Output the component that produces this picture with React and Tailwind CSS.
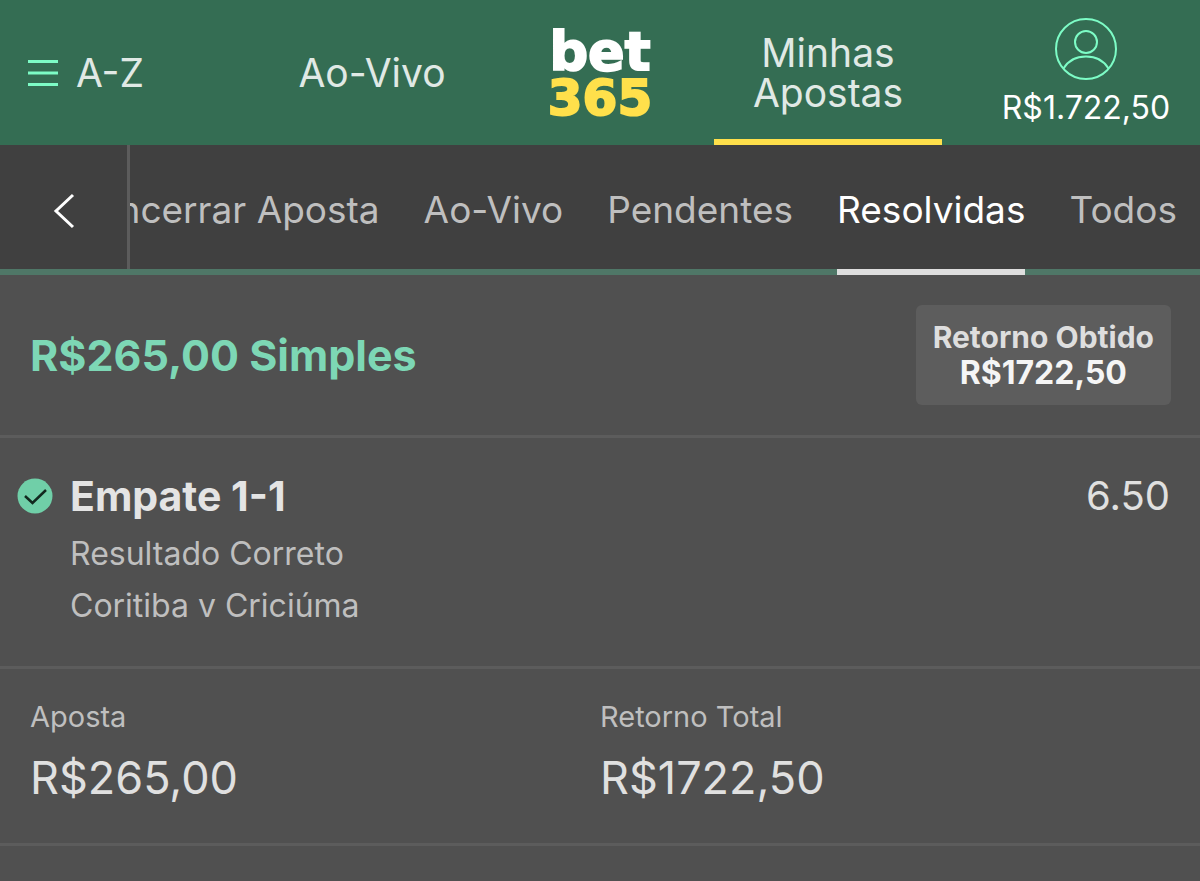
import clsx from "clsx";

const TABS = ["Encerrar Aposta", "Ao-Vivo", "Pendentes", "Resolvidas", "Todos"];
const ACTIVE_TAB = "Resolvidas";


const MenuIcon = () => (
  <svg width="30" height="28" viewBox="0 0 30 28" stroke="#7dfcc6" strokeWidth="3" aria-hidden="true">
    <path d="M0 2.500H30M0 14H30M0 25.500H30" />
  </svg>
)

const AccountIcon = () => (
  <svg width="62" height="62" viewBox="0 0 62 62" fill="none" stroke="#7dfcc6" strokeWidth="2" aria-hidden="true">
    <circle cx="31" cy="31" r="30" />
    <circle cx="31" cy="24" r="11" />
    <path d="M8.500 50.500C13 43 21 38.500 31 38.500S49 43 53.500 50.500" />
  </svg>
)

const BackIcon = () => (
  <svg width="22" height="36" viewBox="0 0 22 36" fill="none" stroke="#fff" strokeWidth="3" aria-hidden="true">
    <path d="M20 2L3 18L20 34" />
  </svg>
)

const WonIcon = () => (
  <svg width="36" height="36" viewBox="0 0 36 36" fill="none" role="img" aria-label="Ganha">
    <circle cx="18" cy="18" r="17.500" fill="#70cfa8" />
    <path d="M8 18L15.500 25L29 12" stroke="#12291f" strokeWidth="2.500" />
  </svg>
)

const Header = () => {
  return (
    <header className="flex h-[145px] bg-[#346d53] text-[39px] leading-10 text-[#e0e9e5]">
      <button className="flex w-[21.5%] items-center gap-[18px] pl-7"><MenuIcon />A-Z</button>
      <a href="#ao-vivo" className="flex w-[19%] items-center justify-center">Ao-Vivo</a>
      <a href="#inicio" className="flex w-[19%] flex-col items-center justify-center pt-1 font-['DejaVu_Sans',sans-serif] font-bold [-webkit-text-stroke-width:2px]">
        <span className="text-[54px] leading-[46px] text-white">bet</span>
        <span className="text-[50px] leading-[46px] text-[#ffe04b]">365</span>
      </a>
      <a href="#apostas" className="flex w-[19%] items-center justify-center border-b-6 border-[#ffe04b] pt-1.5 text-center">Minhas Apostas</a>
      <button className="flex w-[21.5%] flex-col items-center gap-2.5 pt-[18px] pl-[30px] text-[32px] leading-9 text-white">
        <AccountIcon />
        R$1.722,50
      </button>
    </header>
  )
}

const TabBar = () => {
  return (
    <nav className="flex h-[130px] bg-[#404040]">
      <button aria-label="Voltar" className="flex w-[127px] shrink-0 items-center justify-center border-b-6 border-[#4f7767] pt-2"><BackIcon /></button>
      <div className="mb-1.5 w-[3px] shrink-0 bg-[#5c5c5c] shadow-[0_6px_0_#4f7767]" />
      <div className="flex min-w-0 flex-1 justify-end gap-11 overflow-hidden bg-linear-to-t from-[#4f7767] from-[6px] to-[#404040] to-[6px] pr-[23px]">
        {TABS.map((tab) => (
          <a
            key={tab}
            href="#apostas"
            className={clsx(
              "flex shrink-0 items-center border-b-6 pt-1.5 text-[37px] whitespace-nowrap",
              tab === ACTIVE_TAB ? "border-[#dedede] text-white" : "border-transparent text-[#bfbfbf]"
            )}
          >
            {tab}
          </a>
        ))}
      </div>
    </nav>
  )
}

const Total = ({ label, value }) => (
  <div className="flex-1">
    <dt className="text-[29px] leading-9 text-[#bfbfbf]">{label}</dt>
    <dd className="mt-4 text-[45px] leading-[54px] text-[#e0e0e0]">{value}</dd>
  </div>
)

const Bet = () => {
  return (
    <main>
      <section className="flex items-center justify-between border-b-3 border-[#5c5c5c] py-[30px] pr-[29px] pl-[30px]">
        <h1 className="text-[43px] leading-[50px] font-bold text-[#7dd7b5]">R$265,00 Simples</h1>
        <div className="rounded-md bg-[#5d5d5d] px-[17px] py-[14px] text-center font-bold">
          <div className="text-[30px] leading-9 text-[#dedede]">Retorno Obtido</div>
          <div className="text-[32px] leading-9 text-[#f5f5f5]">R$1722,50</div>
        </div>
      </section>

      <section className="flex gap-[17px] border-b-3 border-[#5c5c5c] pt-[34px] pr-[30px] pb-[34px] pl-[17px]">
        <div className="flex h-12 items-center"><WonIcon /></div>
        <div className="flex-1">
          <h2 className="text-[41px] leading-[48px] font-bold text-[#e4e4e4]">Empate 1-1</h2>
          <p className="mt-2 text-[32px] leading-[52px] text-[#bfbfbf]">Resultado Correto</p>
          <p className="text-[32px] leading-[52px] text-[#bfbfbf]">Coritiba v Criciúma</p>
        </div>
        <div className="text-[40px] leading-[48px] text-[#e0e0e0]">6.50</div>
      </section>

      <dl className="flex border-b-3 border-[#5c5c5c] px-[30px] pt-[30px] pb-[38px]">
        <Total label="Aposta" value="R$265,00" />
        <Total label="Retorno Total" value="R$1722,50" />
      </dl>
    </main>
  )
}

const App = () => {
  return (
    <div className="min-h-screen bg-[#505050] font-[Inter,sans-serif]">
      <Header />
      <TabBar />
      <Bet />
    </div>
  )
}

export default App
